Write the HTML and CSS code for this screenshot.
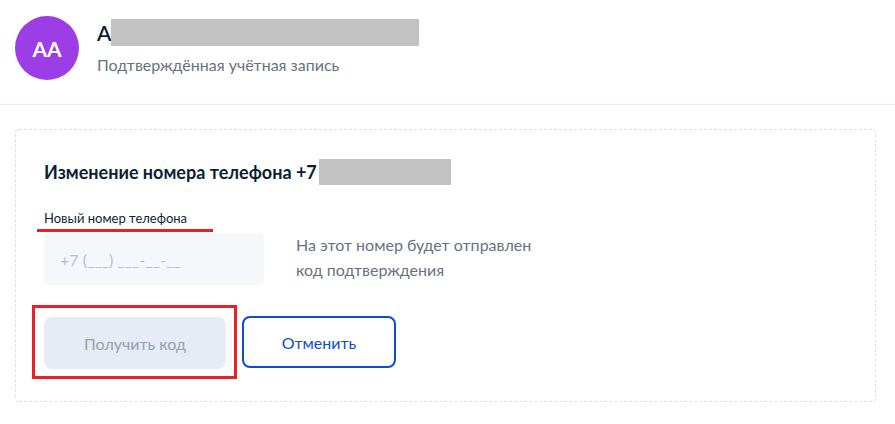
FILE: index.html
```html
<!DOCTYPE html>
<html lang="ru">
<head>
<meta charset="utf-8">
<title>Изменение номера телефона</title>
<link rel="stylesheet" href="styles.css">
</head>
<body>
<header class="profile">
  <div class="avatar">AA</div>
  <div class="profile-info">
    <div class="name-row"><span class="name">А</span><span class="mask mask-name"></span></div>
    <div class="status">Подтверждённая учётная запись</div>
  </div>
</header>
<section class="card">
  <h2 class="title"><span>Изменение номера телефона +7</span><span class="mask mask-phone"></span></h2>
  <div class="field-label"><span>Новый номер телефона</span><span class="underline"></span></div>
  <div class="field-row">
    <div class="input">+7 (___) ___-__-__</div>
    <p class="hint">На этот номер будет отправлен<br>код подтверждения</p>
  </div>
  <div class="actions">
    <div class="highlight"><button class="btn btn-disabled">Получить код</button></div>
    <button class="btn btn-outline">Отменить</button>
  </div>
</section>
</body>
</html>
```
FILE: styles.css
```css
* { box-sizing: border-box; }
html, body { margin: 0; padding: 0; background: #fff; }
body {
  font-family: Lato, "Noto Sans", sans-serif;
  color: #0b1f33;
}
.profile {
  display: flex;
  align-items: flex-start;
  gap: 18px;
  padding: 16px 15px 0 15px;
  height: 105px;
  border-bottom: 1px solid #e4ecfd;
}
.avatar {
  width: 64px;
  height: 64px;
  border-radius: 50%;
  background: #9c3de6;
  color: #fff;
  font-weight: 700;
  font-size: 21px;
  display: flex;
  align-items: center;
  justify-content: center;
  flex-shrink: 0;
}
.profile-info { padding-top: 3px; }
.name-row { display: flex; align-items: center; height: 27px; }
.name { font-size: 21px; line-height: 27px; font-weight: 600; }
.mask { display: inline-block; background: #c2c2c2; }
.mask-name { width: 308px; height: 27px; margin-left: 0; }
.status {
  margin-top: 8px;
  font-size: 16px;
  line-height: 21px;
  color: #66727f;
}
.card {
  margin: 24px 19px 0 15px;
  height: 273px;
  border: 1px dashed #d5def5;
  border-radius: 4px;
  padding: 29px 28px 0 28px;
}
.title {
  margin: 0;
  display: flex;
  align-items: center;
  font-size: 18px;
  line-height: 26px;
  font-weight: 700;
  height: 26px;
}
.mask-phone { width: 132px; height: 26px; margin-left: 2px; }
.field-label {
  position: relative;
  margin-top: 25px;
  font-size: 13px;
  line-height: 17px;
  height: 18px;
}
.underline {
  position: absolute;
  left: -7px;
  top: 19px;
  width: 176px;
  height: 3px;
  background: #e8202a;
}
.field-row {
  display: flex;
  align-items: flex-start;
  gap: 32px;
  margin-top: 5px;
}
.input {
  width: 220px;
  height: 52px;
  border-radius: 4px;
  background: #f5f7fa;
  padding: 0 16px;
  display: flex;
  align-items: center;
  font-size: 16px;
  color: #b3bfd6;
}
.hint {
  margin: -1px 0 0 0;
  font-size: 16px;
  line-height: 25px;
  color: #66727f;
}
.actions {
  display: flex;
  align-items: center;
  gap: 5px;
  margin-top: 20px;
  margin-left: -12px;
}
.highlight {
  border: 3px solid #e8202a;
  padding: 9px 8px 7px 9px;
}
.btn {
  height: 52px;
  border-radius: 8px;
  font-family: inherit;
  font-size: 16px;
  cursor: pointer;
}
.btn-disabled {
  display: block;
  width: 182px;
  border: none;
  background: #e6ebf5;
  color: #95a0ae;
}
.btn-outline {
  width: 154px;
  background: #fff;
  border: 2px solid #0d4cd3;
  color: #0d4cd3;
}
```
